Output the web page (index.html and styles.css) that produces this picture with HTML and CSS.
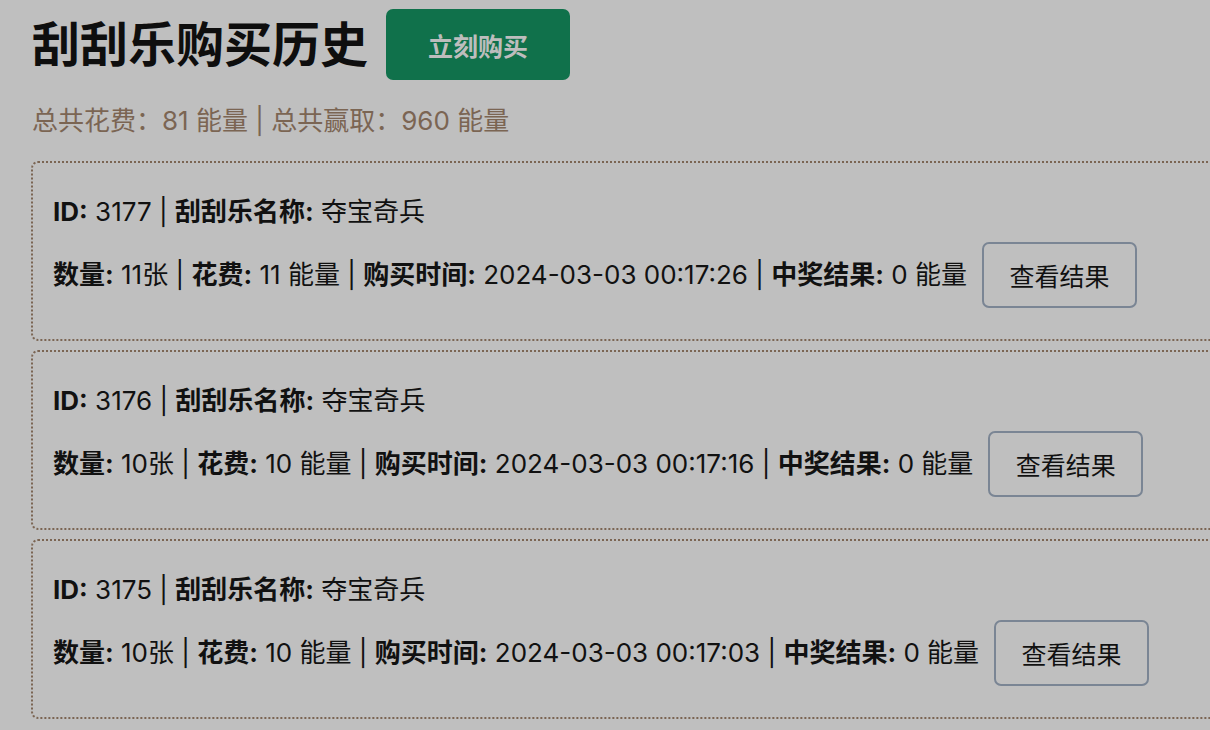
FILE: index.html
```html
<!DOCTYPE html>
<html lang="zh-CN">
<head>
<meta charset="utf-8">
<title>刮刮乐购买历史</title>
<link rel="stylesheet" href="styles.css">
</head>
<body>
<div class="page">
  <header class="header">
    <h1 class="title">刮刮乐购买历史</h1>
    <button class="buy-btn">立刻购买</button>
  </header>
  <p class="summary">总共花费：81 能量 | 总共赢取：960 能量</p>
  <div class="list">
    <div class="card">
      <p class="line"><b>ID:</b> 3177 | <b>刮刮乐名称:</b> 夺宝奇兵</p>
      <div class="row">
        <p class="line"><b>数量:</b> 11张 | <b>花费:</b> 11 能量 | <b>购买时间:</b> 2024-03-03 00:17:26 | <b>中奖结果:</b> 0 能量</p>
        <button class="view-btn">查看结果</button>
      </div>
    </div>
    <div class="card">
      <p class="line"><b>ID:</b> 3176 | <b>刮刮乐名称:</b> 夺宝奇兵</p>
      <div class="row">
        <p class="line"><b>数量:</b> 10张 | <b>花费:</b> 10 能量 | <b>购买时间:</b> 2024-03-03 00:17:16 | <b>中奖结果:</b> 0 能量</p>
        <button class="view-btn">查看结果</button>
      </div>
    </div>
    <div class="card">
      <p class="line"><b>ID:</b> 3175 | <b>刮刮乐名称:</b> 夺宝奇兵</p>
      <div class="row">
        <p class="line"><b>数量:</b> 10张 | <b>花费:</b> 10 能量 | <b>购买时间:</b> 2024-03-03 00:17:03 | <b>中奖结果:</b> 0 能量</p>
        <button class="view-btn">查看结果</button>
      </div>
    </div>
  </div>
</div>
</body>
</html>
```

FILE: styles.css
```css
html, body {
  margin: 0;
  padding: 0;
  background: #bfbfbf;
  overflow: hidden;
}
body {
  font-family: "Inter", "Noto Sans CJK SC", sans-serif;
  color: #111111;
  font-size: 26px;
}
.page {
  padding: 9px 0 0 31px;
}
.header {
  display: flex;
  align-items: center;
  gap: 18px;
}
.title {
  margin: 0;
  font-size: 48px;
  font-weight: 700;
  line-height: 71px;
  color: #0e0e0e;
  padding-left: 1px;
}
.buy-btn {
  font-family: inherit;
  font-size: 25px;
  font-weight: 700;
  color: #bdbdbd;
  background: #10714b;
  border: none;
  border-radius: 7px;
  width: 184px;
  height: 71px;
  padding: 0;
}
.summary {
  margin: 23px 0 0 1px;
  font-size: 26px;
  line-height: 36px;
  color: #7b6553;
}
.list {
  margin-top: 22px;
  display: flex;
  flex-direction: column;
  gap: 9px;
}
.card {
  width: 1220px;
  box-sizing: border-box;
  border: 2px dotted #7b6553;
  border-radius: 7px;
  padding: 31px 20px 31px;
  display: flex;
  flex-direction: column;
  gap: 12px;
}
.line {
  margin: 0;
  line-height: 36px;
  white-space: nowrap;
}
.line b {
  font-weight: 700;
}
.row {
  display: flex;
  align-items: center;
  gap: 15px;
}
.view-btn {
  font-family: inherit;
  font-size: 25px;
  color: #111111;
  background: transparent;
  border: 2px solid #7a8594;
  border-radius: 7px;
  width: 155px;
  height: 66px;
  padding: 0;
}
```
